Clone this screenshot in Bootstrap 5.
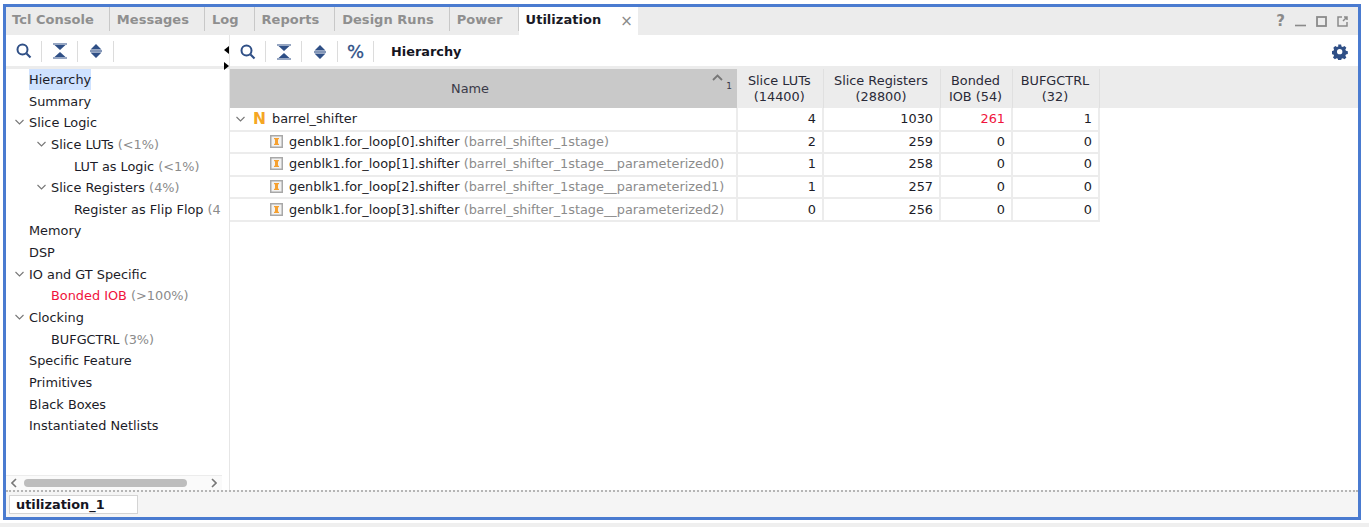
<!DOCTYPE html>
<html lang="en">
<head>
    <meta charset="UTF-8">
    <title>Utilization</title>
    <link href="https://cdn.jsdelivr.net/npm/bootstrap@5.3.2/dist/css/bootstrap.min.css" rel="stylesheet">
    <style>
        html, body { height: 100%; }
        body { font-family: "DejaVu Sans", sans-serif; font-size: 12.87px; color: #1c1c28; background: #fff; overflow: hidden; }
        .outer { height: 527px; padding: 4px 8px 0 3px; background: linear-gradient(#fff 523px, #efefef 523px); }
        .frame { height: 516px; border: 3px solid #4a7bd0; background: #fff; }
        .tabbar { height: 28px; background: #ececec; }
        .vtab { height: 24px; padding: 0 15px 0 7px; font-size: 13px; font-weight: 700; color: #8f8f8f; letter-spacing: .03px; border-right: 1px solid #c8c8c8; line-height: 26px; }
        .vtab:first-child { padding-left: 6px; }
        .vtab.on { height: 28px; background: #fff; color: #1a1a26; border: 0; padding: 0 5px 0 7px; }
        .closex { display: inline-block; color: #8a8a8a; margin-left: 19px; font-weight: 400; font-size: 15px; letter-spacing: 0; vertical-align: -2px; line-height: 1; }
        .winbtns { height: 28px; gap: 10px; padding-right: 10px; }
        .winbtns svg { display: block; }
        .qmark { font-weight: 700; font-size: 15px; color: #8a8a8a; line-height: 1; }
        .leftpane { width: 224px; flex: none; border-right: 1px solid #e6e6e6; position: relative; }
        .tools { height: 34px; border-bottom: 3px solid #ececec; padding-top: 2px; }
        .tool { width: 36px; height: 21px; border-right: 1px solid #dcdcdc; display: flex; align-items: center; justify-content: center; }
        .pct { font-size: 18px; color: #2f4f86; line-height: 1; -webkit-text-stroke: .3px #2f4f86; }
        .toolname { font-weight: 700; color: #15151f; margin-left: 17px; }
        .gear { margin-left: auto; margin-right: 10px; }
        .tree { height: 407px; overflow: hidden; }
        .tnode { height: 21.65px; line-height: 21px; white-space: nowrap; position: relative; }
        .lv0 { padding-left: 23px; }
        .lv1 { padding-left: 45px; }
        .lv2 { padding-left: 68px; }
        .twist { position: absolute; top: 7px; width: 9px; height: 6px; }
        .lv0 .twist { left: 9px; }
        .lv1 .twist { left: 31px; }
        .sel { background: #cfe2ff; display: inline-block; height: 21px; }
        .pcent { color: #8b8b8b; }
        .redtxt { color: #f0143c; }
        .hsb { height: 15px; background: #fafafa; border-top: 1px solid #ececec; width: 216px; padding: 0 5px; }
        .hthumb { height: 8px; background: #bdbdbd; border-radius: 4px; margin-left: 7px; }
        .hgap { width: 24px; }
        .splitarrow { position: absolute; right: 0; width: 0; height: 0; border-style: solid; }
        .sa1 { top: 11px; border-width: 4px 5px 4px 0; border-color: transparent #000 transparent transparent; }
        .sa2 { top: 27px; border-width: 4px 0 4px 5px; border-color: transparent transparent transparent #000; }
        .rightpane { min-width: 0; }
        .utable { border-collapse: collapse; table-layout: fixed; width: 869px; }
        .utable th { background: #ececec; font-weight: 400; text-align: center; line-height: 15.5px; height: 39px; padding: 0 1px 0 0; border-right: 1px solid #e0e0e0; color: #2a2a38; vertical-align: middle; }
        .utable th.sorted { background: #c9c9c9; position: relative; border-right: 0; padding-right: 27px; color: #3a3a48; }
        .sortup { position: absolute; right: 14px; top: 5px; }
        .sortnum { position: absolute; right: 5px; top: 13px; font-size: 9px; line-height: 1; }
        .utable td { height: 22.6px; padding: 0 6px 0 0; text-align: right; border-right: 2px solid #ececec; border-bottom: 2px solid #ececec; line-height: 20px; white-space: nowrap; overflow: hidden; }
        .utable td.namecell { text-align: left; position: relative; }
        .headfill { flex: 1; height: 39px; background: #ececec; }
        .nicon { color: #f5a623; font-weight: 700; font-size: 15.5px; line-height: 1; margin-left: 23px; margin-right: 6px; vertical-align: -1px; }
        .subicon { display: inline-block; vertical-align: -2px; margin-left: 40px; margin-right: 6px; }
        .rowtwist { position: absolute; left: 6px; top: 8px; }
        .bottomstrip { height: 27px; border-top: 2px dotted #b5b5b5; background: #f5f5f5; padding: 3px 0 0 3px; }
        .sheetname { width: 129px; height: 19px; background: #fff; border: 1px solid #d4d4d4; font-weight: 700; padding-left: 6px; line-height: 17px; color: #15151f; }
    </style>
</head>
<body>
<div class="outer">
  <div class="frame d-flex flex-column">
    <div class="tabbar d-flex align-items-start justify-content-between">
      <div class="d-flex">
        <div class="vtab">Tcl Console</div>
        <div class="vtab">Messages</div>
        <div class="vtab">Log</div>
        <div class="vtab">Reports</div>
        <div class="vtab">Design Runs</div>
        <div class="vtab">Power</div>
        <div class="vtab on">Utilization<span class="closex">×</span></div>
      </div>
      <div class="d-flex align-items-center winbtns">
        <span class="qmark">?</span>
        <svg width="11" height="11" viewBox="0 0 11 11"><path d="M0 9.500h11" stroke="#8a8a8a" stroke-width="1.600"/></svg>
        <svg width="11" height="11" viewBox="0 0 11 11"><rect x="1" y="1" width="9" height="9" fill="none" stroke="#8a8a8a" stroke-width="1.800"/></svg>
        <svg width="11" height="11" viewBox="0 0 11 11"><path d="M5 1H1v9h9V6M6 5l4-4M7 1h3v3" fill="none" stroke="#8a8a8a" stroke-width="1.500"/></svg>
      </div>
    </div>
    <div class="d-flex flex-grow-1" style="min-height:0">
      <div class="leftpane d-flex flex-column">
        <div class="tools d-flex align-items-center">
          <div class="tool"><svg width="18" height="18" viewBox="0 0 18 18"><circle cx="7.500" cy="7.500" r="5" fill="none" stroke="#2f4f86" stroke-width="2"/><path d="M11.500 11.500l4 4" stroke="#2f4f86" stroke-width="2.200"/></svg></div>
          <div class="tool"><svg width="14" height="16" viewBox="0 0 14 16"><path d="M0 1h14M0 15h14" stroke="#2f4f86" stroke-width="1.200"/><path d="M1.500 2h11L7 7zM1.500 14h11L7 9z" fill="#2f4f86"/></svg></div>
          <div class="tool"><svg width="14" height="16" viewBox="0 0 14 16"><path d="M1 8h12" stroke="#2f4f86" stroke-width="1.200"/><path d="M7 1l5.500 5.500h-11zM7 15l5.500-5.500h-11z" fill="#2f4f86"/></svg></div>
        </div>
        <span class="splitarrow sa1"></span>
        <span class="splitarrow sa2"></span>
        <div class="tree">
          <div class="tnode lv0"><span class="sel">Hierarchy</span></div>
          <div class="tnode lv0">Summary</div>
          <div class="tnode lv0"><svg class="twist" viewBox="0 0 9 6"><path d="M.5 1l4 4 4-4" fill="none" stroke="#777" stroke-width="1.100"/></svg>Slice Logic</div>
          <div class="tnode lv1"><svg class="twist" viewBox="0 0 9 6"><path d="M.5 1l4 4 4-4" fill="none" stroke="#777" stroke-width="1.100"/></svg>Slice LUTs <span class="pcent">(&lt;1%)</span></div>
          <div class="tnode lv2">LUT as Logic <span class="pcent">(&lt;1%)</span></div>
          <div class="tnode lv1"><svg class="twist" viewBox="0 0 9 6"><path d="M.5 1l4 4 4-4" fill="none" stroke="#777" stroke-width="1.100"/></svg>Slice Registers <span class="pcent">(4%)</span></div>
          <div class="tnode lv2">Register as Flip Flop <span class="pcent">(4</span></div>
          <div class="tnode lv0">Memory</div>
          <div class="tnode lv0">DSP</div>
          <div class="tnode lv0"><svg class="twist" viewBox="0 0 9 6"><path d="M.5 1l4 4 4-4" fill="none" stroke="#777" stroke-width="1.100"/></svg>IO and GT Specific</div>
          <div class="tnode lv1"><span class="redtxt">Bonded IOB</span> <span class="pcent">(&gt;100%)</span></div>
          <div class="tnode lv0"><svg class="twist" viewBox="0 0 9 6"><path d="M.5 1l4 4 4-4" fill="none" stroke="#777" stroke-width="1.100"/></svg>Clocking</div>
          <div class="tnode lv1">BUFGCTRL <span class="pcent">(3%)</span></div>
          <div class="tnode lv0">Specific Feature</div>
          <div class="tnode lv0">Primitives</div>
          <div class="tnode lv0">Black Boxes</div>
          <div class="tnode lv0">Instantiated Netlists</div>
        </div>
        <div class="hsb d-flex align-items-center justify-content-between">
          <svg width="6" height="10" viewBox="0 0 6 10"><path d="M5 1L1 5l4 4" fill="none" stroke="#777" stroke-width="1.600"/></svg>
          <div class="hthumb flex-grow-1"></div>
          <div class="hgap"></div>
          <svg width="6" height="10" viewBox="0 0 6 10"><path d="M1 1l4 4-4 4" fill="none" stroke="#777" stroke-width="1.600"/></svg>
        </div>
      </div>
      <div class="rightpane flex-grow-1 d-flex flex-column">
        <div class="tools d-flex align-items-center">
          <div class="tool"><svg width="18" height="18" viewBox="0 0 18 18"><circle cx="7.500" cy="7.500" r="5" fill="none" stroke="#2f4f86" stroke-width="2"/><path d="M11.500 11.500l4 4" stroke="#2f4f86" stroke-width="2.200"/></svg></div>
          <div class="tool"><svg width="14" height="16" viewBox="0 0 14 16"><path d="M0 1h14M0 15h14" stroke="#2f4f86" stroke-width="1.200"/><path d="M1.500 2h11L7 7zM1.500 14h11L7 9z" fill="#2f4f86"/></svg></div>
          <div class="tool"><svg width="14" height="16" viewBox="0 0 14 16"><path d="M1 8h12" stroke="#2f4f86" stroke-width="1.200"/><path d="M7 1l5.500 5.500h-11zM7 15l5.500-5.500h-11z" fill="#2f4f86"/></svg></div>
          <div class="tool"><span class="pct">%</span></div>
          <span class="toolname">Hierarchy</span>
          <svg class="gear" width="16" height="16" viewBox="0 0 16 16"><path fill="#2f4f86" fill-rule="evenodd" d="M6.500 1h3l.4 2 1.300.6 1.800-1.100 2 2-1.100 1.800.6 1.300 2 .4v3l-2 .4-.6 1.300 1.100 1.800-2 2-1.800-1.100-1.300.6-.4 2h-3l-.4-2-1.300-.6-1.800 1.100-2-2 1.100-1.800-.6-1.300-2-.4v-3l2-.4.6-1.300L1.400 4.500l2-2 1.800 1.100 1.300-.6zM8 5.700a2.800 2.800 0 1 0 0 5.600 2.800 2.800 0 0 0 0-5.600z" transform="translate(0 -.5) scale(.96)"/></svg>
        </div>
        <div class="d-flex">
          <table class="utable">
            <colgroup><col style="width:507px"><col style="width:86px"><col style="width:117px"><col style="width:72px"><col style="width:87px"></colgroup>
            <thead>
              <tr>
                <th class="sorted">Name
                  <svg class="sortup" width="11" height="7" viewBox="0 0 11 7"><path d="M1 6l4.500-4.500L10 6" fill="none" stroke="#777" stroke-width="1.800"/></svg>
                  <span class="sortnum">1</span>
                </th>
                <th>Slice LUTs<br>(14400)</th>
                <th>Slice Registers<br>(28800)</th>
                <th>Bonded<br>IOB (54)</th>
                <th>BUFGCTRL<br>(32)</th>
              </tr>
            </thead>
            <tbody>
              <tr>
                <td class="namecell"><svg class="rowtwist" width="9" height="6" viewBox="0 0 9 6"><path d="M.5 1l4 4 4-4" fill="none" stroke="#777" stroke-width="1.100"/></svg><span class="nicon">N</span>barrel_shifter</td>
                <td>4</td><td>1030</td><td class="redtxt">261</td><td>1</td>
              </tr>
              <tr>
                <td class="namecell"><svg class="subicon" width="13" height="13" viewBox="0 0 13 13"><rect x=".75" y=".75" width="11.500" height="11.500" fill="#f2f2f2" stroke="#a8a8a8" stroke-width="1.500"/><path d="M4 3h5v1.300H8v4.400h1V10H4V8.700h1V4.300H4z" fill="#f5a030"/></svg>genblk1.for_loop[0].shifter <span class="pcent">(barrel_shifter_1stage)</span></td>
                <td>2</td><td>259</td><td>0</td><td>0</td>
              </tr>
              <tr>
                <td class="namecell"><svg class="subicon" width="13" height="13" viewBox="0 0 13 13"><rect x=".75" y=".75" width="11.500" height="11.500" fill="#f2f2f2" stroke="#a8a8a8" stroke-width="1.500"/><path d="M4 3h5v1.300H8v4.400h1V10H4V8.700h1V4.300H4z" fill="#f5a030"/></svg>genblk1.for_loop[1].shifter <span class="pcent">(barrel_shifter_1stage__parameterized0)</span></td>
                <td>1</td><td>258</td><td>0</td><td>0</td>
              </tr>
              <tr>
                <td class="namecell"><svg class="subicon" width="13" height="13" viewBox="0 0 13 13"><rect x=".75" y=".75" width="11.500" height="11.500" fill="#f2f2f2" stroke="#a8a8a8" stroke-width="1.500"/><path d="M4 3h5v1.300H8v4.400h1V10H4V8.700h1V4.300H4z" fill="#f5a030"/></svg>genblk1.for_loop[2].shifter <span class="pcent">(barrel_shifter_1stage__parameterized1)</span></td>
                <td>1</td><td>257</td><td>0</td><td>0</td>
              </tr>
              <tr>
                <td class="namecell"><svg class="subicon" width="13" height="13" viewBox="0 0 13 13"><rect x=".75" y=".75" width="11.500" height="11.500" fill="#f2f2f2" stroke="#a8a8a8" stroke-width="1.500"/><path d="M4 3h5v1.300H8v4.400h1V10H4V8.700h1V4.300H4z" fill="#f5a030"/></svg>genblk1.for_loop[3].shifter <span class="pcent">(barrel_shifter_1stage__parameterized2)</span></td>
                <td>0</td><td>256</td><td>0</td><td>0</td>
              </tr>
            </tbody>
          </table>
          <div class="headfill"></div>
        </div>
      </div>
    </div>
    <div class="bottomstrip"><div class="sheetname">utilization_1</div></div>
  </div>
</div>
<script src="https://cdn.jsdelivr.net/npm/bootstrap@5.3.2/dist/js/bootstrap.bundle.min.js"></script>
</body>
</html>
